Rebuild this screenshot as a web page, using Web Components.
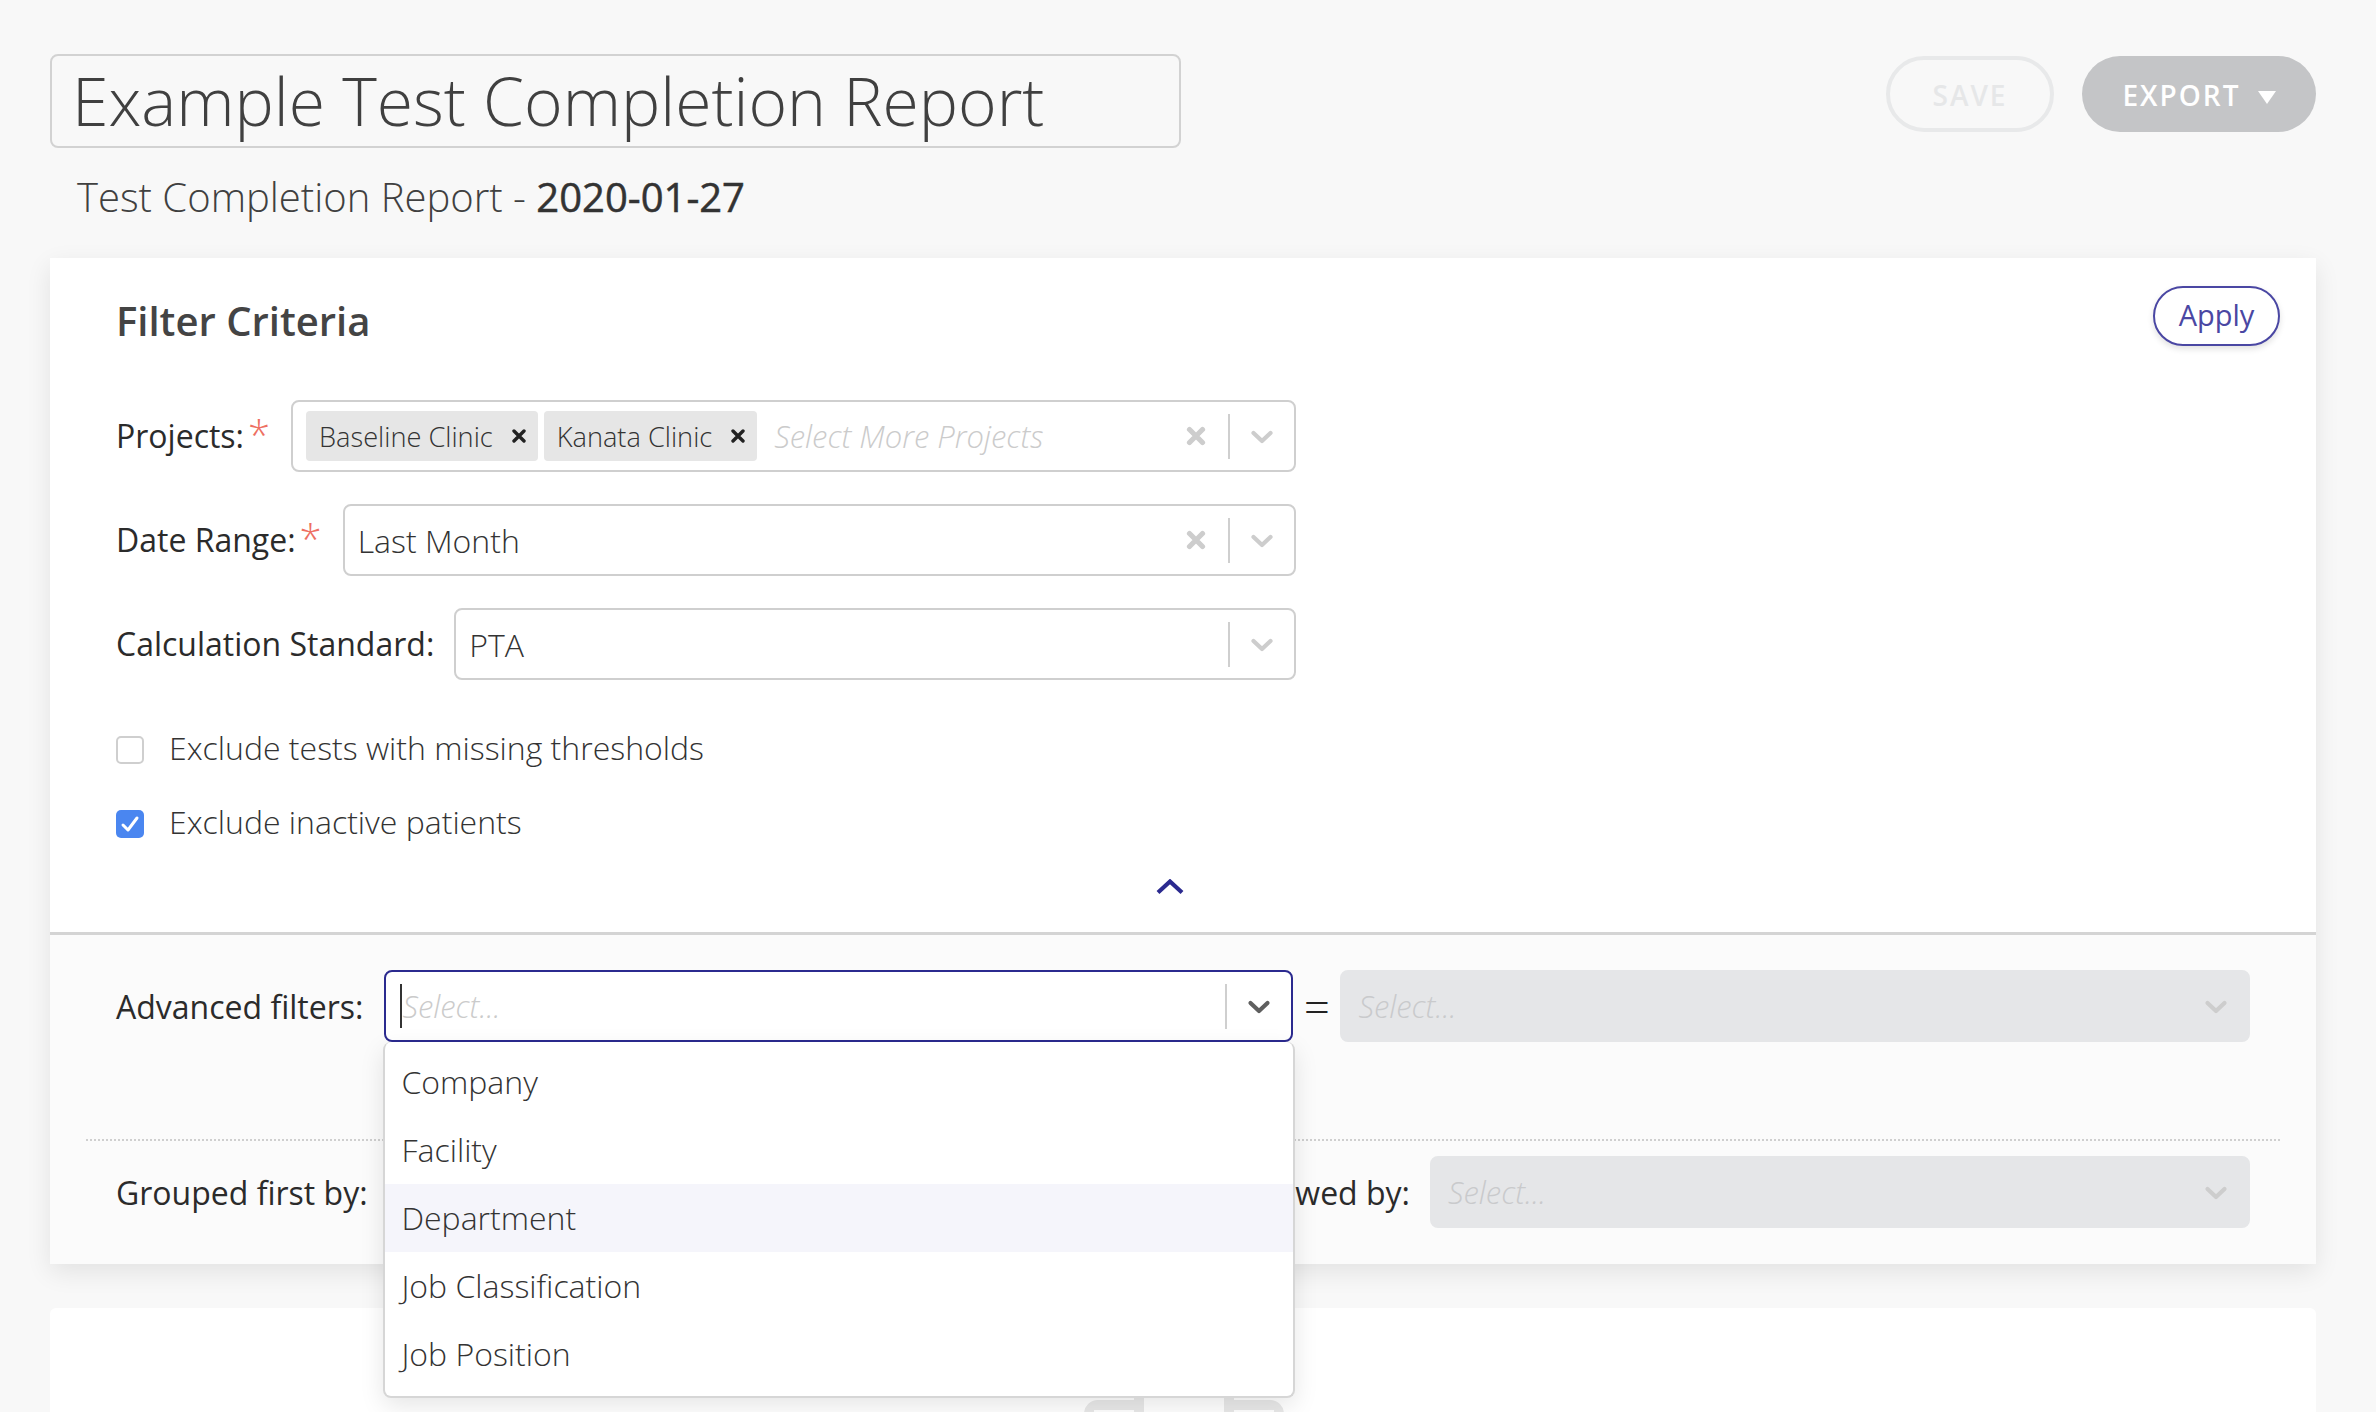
<!DOCTYPE html>
<html>
<head>
<meta charset="utf-8">
<title>Test Completion Report</title>
<style>
  html, body { margin: 0; height: 100%; overflow: hidden; }
  body { background: #f8f8f8; font-family: "Open Sans", sans-serif; color: #333; }
</style>
</head>
<body>
<report-page>
  <report-header slot="header"></report-header>
  <filter-card>
    <filter-row label="Projects:" required>
      <fake-select clearable placeholder="Select More Projects" style="flex:1">
        <value-tag>Baseline Clinic</value-tag>
        <value-tag>Kanata Clinic</value-tag>
      </fake-select>
    </filter-row>
    <filter-row label="Date Range:" required>
      <fake-select clearable value="Last Month" style="flex:1"></fake-select>
    </filter-row>
    <filter-row label="Calculation Standard:">
      <fake-select value="PTA" style="flex:1"></fake-select>
    </filter-row>
    <check-row style="margin-top:44px">Exclude tests with missing thresholds</check-row>
    <check-row checked>Exclude inactive patients</check-row>
  </filter-card>
</report-page>

<script>
  // small helper, every component gets its html through this
  function shadow(el, html) {
    el.attachShadow({ mode: "open" }).innerHTML = html;
  }
  const chevron = `<svg width="24" height="14" viewBox="0 0 24 14"><path d="M3.5 3l8.5 8 8.5-8" fill="none" stroke="currentColor" stroke-width="4.2" stroke-linecap="round" stroke-linejoin="round"/></svg>`;
  const cross = `<svg width="20" height="20" viewBox="0 0 20 20"><path d="M3.5 3.5l13 13M16.5 3.5l-13 13" fill="none" stroke="currentColor" stroke-width="5.2" stroke-linecap="round"/></svg>`;

  class ReportPage extends HTMLElement {
    constructor() {
      super();
      shadow(this, `
        <style>
          :host { display: block; padding: 54px 60px 0 50px; }
          .next {
            height: 104px; margin-top: 44px; background: #fff; border-radius: 6px 6px 0 0; overflow: hidden;
            padding: 72px 0 0 2px; box-sizing: border-box; display: flex; align-items: flex-start; justify-content: center; gap: 80px;
          }
        </style>
        <slot name="header"></slot>
        <slot></slot>
        <div class="next">
          <svg width="60" height="32" viewBox="0 0 60 32"><path d="M50 0h10v32H50V30H10v2H0V34a14 14 0 0 1 14-14h36z" fill="#e9e9e9"/></svg>
          <svg width="60" height="32" viewBox="0 0 60 32"><path d="M10 0H0v32h10V30h40v2h10V34a14 14 0 0 0-14-14H10z" fill="#e9e9e9"/></svg>
        </div>
      `);
    }
  }

  class ReportHeader extends HTMLElement {
    constructor() {
      super();
      shadow(this, `
        <style>
          :host { display: block; }
          .top { display: flex; align-items: flex-start; justify-content: space-between; }
          .title {
            box-sizing: border-box; width: 1131px; height: 94px; border: 2px solid #d2d2d2; border-radius: 8px;
            padding-left: 20px; font-weight: 300; font-size: 66px; line-height: 88px; color: #404040; white-space: nowrap;
          }
          .actions { display: flex; gap: 28px; padding-top: 2px; }
          .sub {
            margin: 22px 0 0 27px; font-size: 40px; font-weight: 300; line-height: 54px; color: #404040;
          }
          .sub b { font-weight: 400; color: #333; -webkit-text-stroke: .5px #333; }
          .btn {
            box-sizing: border-box; height: 76px; border-radius: 38px; display: flex; align-items: center;
            justify-content: center; font-size: 28px; font-weight: 600; letter-spacing: 2px; padding-top: 2px;
          }
          .save { width: 168px; border: 4px solid #e8e9ea; color: #e6e7e8; }
          .export { width: 234px; background: #c4c5c7; color: #fff; gap: 17px; }
          .tri { width: 0; height: 0; border: 9px solid transparent; border-top: 13px solid #fff; border-bottom: 0; margin-top: 4px; }
        </style>
        <div class="top">
          <div class="title">Example Test Completion Report</div>
          <div class="actions">
            <div class="btn save">SAVE</div>
            <div class="btn export">EXPORT<span class="tri"></span></div>
          </div>
        </div>
        <div class="sub">Test Completion Report - <b>2020-01-27</b></div>
      `);
    }
  }

  class FilterCard extends HTMLElement {
    constructor() {
      super();
      shadow(this, `
        <style>
          :host {
            display: block; margin-top: 34px; background: #fff; position: relative;
            box-shadow: 0 8px 24px rgba(0,0,0,.09);
          }
          .main { padding: 36px 0 0 66px; position: relative; height: 674px; box-sizing: border-box; }
          h2 { margin: 0 0 52px; font-size: 40px; line-height: 54px; font-weight: 600; color: #444; }
          .apply {
            position: absolute; right: 36px; top: 28px; box-sizing: border-box; width: 127px; height: 60px;
            border: 2px solid #4a47a3; border-radius: 30px; color: #4a47a3; font-size: 29px; padding-bottom: 3px;
            display: flex; align-items: center; justify-content: center; background: #fff;
            box-shadow: 0 3px 6px rgba(0,0,0,.12);
          }
          .fields { width: 1180px; }
          .up { display: flex; justify-content: center; color: #2b2a8f; width: 2240px; margin-left: -66px; padding-top: 7px; }
        </style>
        <div class="main">
          <h2>Filter Criteria</h2>
          <div class="apply">Apply</div>
          <div class="fields"><slot></slot></div>
          <div class="up"><svg width="28" height="16" viewBox="0 0 28 16"><path d="M2 13.5l12-11 12 11" fill="none" stroke="currentColor" stroke-width="4.2"/></svg></div>
        </div>
        <advanced-filters></advanced-filters>
      `);
    }
  }

  class FilterRow extends HTMLElement {
    constructor() {
      super();
      const star = this.hasAttribute("required") ? `<span class="star">*</span>` : "";
      shadow(this, `
        <style>
          :host { display: flex; align-items: center; height: 72px; margin-bottom: 32px; }
          .label { font-size: 32px; color: #2b2b2b; white-space: nowrap; margin-right: 20px; padding-bottom: 2px; }
          .star { color: #ee6f62; font-size: 40px; line-height: 0; font-weight: 300; position: relative; top: 2px; margin: 0 1px 0 4px; }
        </style>
        <span class="label">${this.getAttribute("label")}${star}</span>
        <slot></slot>
      `);
    }
  }

  class FakeSelect extends HTMLElement {
    constructor() {
      super();
      const value = this.getAttribute("value");
      const ph = this.getAttribute("placeholder");
      const text = value ? `<span class="val">${value}</span>` : (ph ? `<span class="ph">${ph}</span>` : "");
      const clear = this.hasAttribute("clearable") ? `<span class="x">${cross}</span>` : "";
      const disabled = this.hasAttribute("disabled");
      const focused = this.hasAttribute("focused");
      const sep = disabled ? "" : `<span class="sep"></span>`;
      shadow(this, `
        <style>
          :host { display: block; box-sizing: border-box; height: 72px; min-width: 0; }
          .box {
            box-sizing: border-box; height: 100%; border: 2px solid #cfcfcf; border-radius: 8px; background: #fff;
            display: flex; align-items: center; padding-left: 13px; font-size: 32px; overflow: hidden;
          }
          :host([disabled]) .box { background: #e5e6e8; border-color: #e5e6e8; padding-left: 16px; }
          :host([focused]) .box { border-color: #2b2a8f; padding-left: 14px; }
          .inner { flex: 1; display: flex; align-items: center; gap: 6px; min-width: 0; }
          .val { color: #333; font-weight: 300; }
          .ph { color: #cbcbcb; font-size: 31px; font-style: italic; font-weight: 300; margin-left: 11px; white-space: nowrap; }
          :host([disabled]) .ph { color: #c9cacc; margin-left: 0; }
          :host([focused]) .ph { margin-left: -6px; }
          .caret { width: 2px; height: 44px; background: #333; flex: none; }
          .x { color: #cdcdcd; display: flex; margin-right: 22px; }
          .sep { width: 2px; height: 45px; background: #cfcfcf; }
          .arrow { color: #cdcdcd; width: 64px; display: flex; justify-content: center; margin-top: 2px; }
          :host([focused]) .arrow { color: #5f5f5f; }
        </style>
        <div class="box">
          <div class="inner">
            ${focused ? `<span class="caret"></span>` : ""}
            <slot></slot>
            ${text}
          </div>
          ${clear}${sep}
          <span class="arrow">${chevron}</span>
        </div>
      `);
    }
  }

  class ValueTag extends HTMLElement {
    constructor() {
      super();
      shadow(this, `
        <style>
          :host {
            display: flex; align-items: center; height: 50px; background: #e6e6e6; border-radius: 4px;
            padding: 0 12px 0 13px; font-size: 27.2px; font-weight: 300; color: #333; white-space: nowrap; gap: 19px;
          }
          svg { color: #222; }
        </style>
        <slot></slot>
        <svg width="14" height="14" viewBox="0 0 14 14"><path d="M2 2l10 10M12 2L2 12" fill="none" stroke="currentColor" stroke-width="3.4" stroke-linecap="round"/></svg>
      `);
    }
  }

  class CheckRow extends HTMLElement {
    constructor() {
      super();
      const tick = this.hasAttribute("checked")
        ? `<svg width="28" height="28" viewBox="0 0 28 28"><path d="M7 15l5 5 9-12" fill="none" stroke="#fff" stroke-width="3" stroke-linecap="round" stroke-linejoin="round"/></svg>`
        : "";
      shadow(this, `
        <style>
          :host { display: flex; align-items: center; height: 46px; margin-bottom: 28px; gap: 25px; font-size: 32px; font-weight: 300; color: #333; white-space: nowrap; }
          .box { box-sizing: border-box; width: 28px; height: 28px; margin-top: 6px; border-radius: 5px; border: 2px solid #cfcfcf; background: #fff; flex: none; }
          :host([checked]) .box { background: #4a86f0; border: 0; }
          svg { display: block; }
        </style>
        <span class="box">${tick}</span>
        <slot></slot>
      `);
    }
  }

  class AdvancedFilters extends HTMLElement {
    constructor() {
      super();
      shadow(this, `
        <style>
          :host { display: block; background: #fbfbfb; border-top: 3px solid #d4d4d4; padding: 35px 66px 36px; position: relative; }
          .row { display: flex; align-items: center; height: 72px; }
          .label { font-size: 32px; color: #2b2b2b; white-space: nowrap; }
          .eq { font-size: 46px; line-height: 72px; width: 47px; text-align: center; color: #222; flex: none; font-weight: 300; }
          .gap { height: 97px; }
          .dots { height: 0; border-top: 2px dotted #cfcfcf; margin: 0 -30px 15px -30px; }
        </style>
        <div class="row">
          <span class="label" style="margin-right:21px">Advanced filters:</span>
          <div style="position:relative;width:909px;height:72px;flex:none">
            <fake-select focused placeholder="Select..."></fake-select>
            <option-menu></option-menu>
          </div>
          <span class="eq">=</span>
          <fake-select disabled placeholder="Select..." style="flex:1"></fake-select>
        </div>
        <div class="gap"></div>
        <div class="dots"></div>
        <div class="row">
          <span class="label">Grouped first by:</span>
          <span class="label" style="margin-left:auto;margin-right:20px">Followed by:</span>
          <fake-select disabled placeholder="Select..." style="width:820px;flex:none"></fake-select>
        </div>
      `);
    }
  }

  class OptionMenu extends HTMLElement {
    constructor() {
      super();
      const items = ["Company", "Facility", "Department", "Job Classification", "Job Position"];
      shadow(this, `
        <style>
          :host {
            position: absolute; left: -1px; top: 72px; width: 912px; z-index: 5; box-sizing: border-box;
            background: #fff; border: 2px solid #d6d6d6; border-top: 0; border-radius: 8px; padding: 6px 0 8px;
            box-shadow: 0 8px 24px rgba(0,0,0,.1);
          }
          div { box-sizing: border-box; height: 68px; display: flex; align-items: center; padding: 0 0 2px 16px; font-size: 32px; font-weight: 300; color: #333; }
          .on { background: #f5f5fb; }
        </style>
        ${items.map((t, i) => `<div class="${i == 2 ? "on" : ""}">${t}</div>`).join("")}
      `);
    }
  }

  customElements.define("report-page", ReportPage);
  customElements.define("report-header", ReportHeader);
  customElements.define("filter-card", FilterCard);
  customElements.define("filter-row", FilterRow);
  customElements.define("fake-select", FakeSelect);
  customElements.define("value-tag", ValueTag);
  customElements.define("check-row", CheckRow);
  customElements.define("advanced-filters", AdvancedFilters);
  customElements.define("option-menu", OptionMenu);
</script>
</body>
</html>
